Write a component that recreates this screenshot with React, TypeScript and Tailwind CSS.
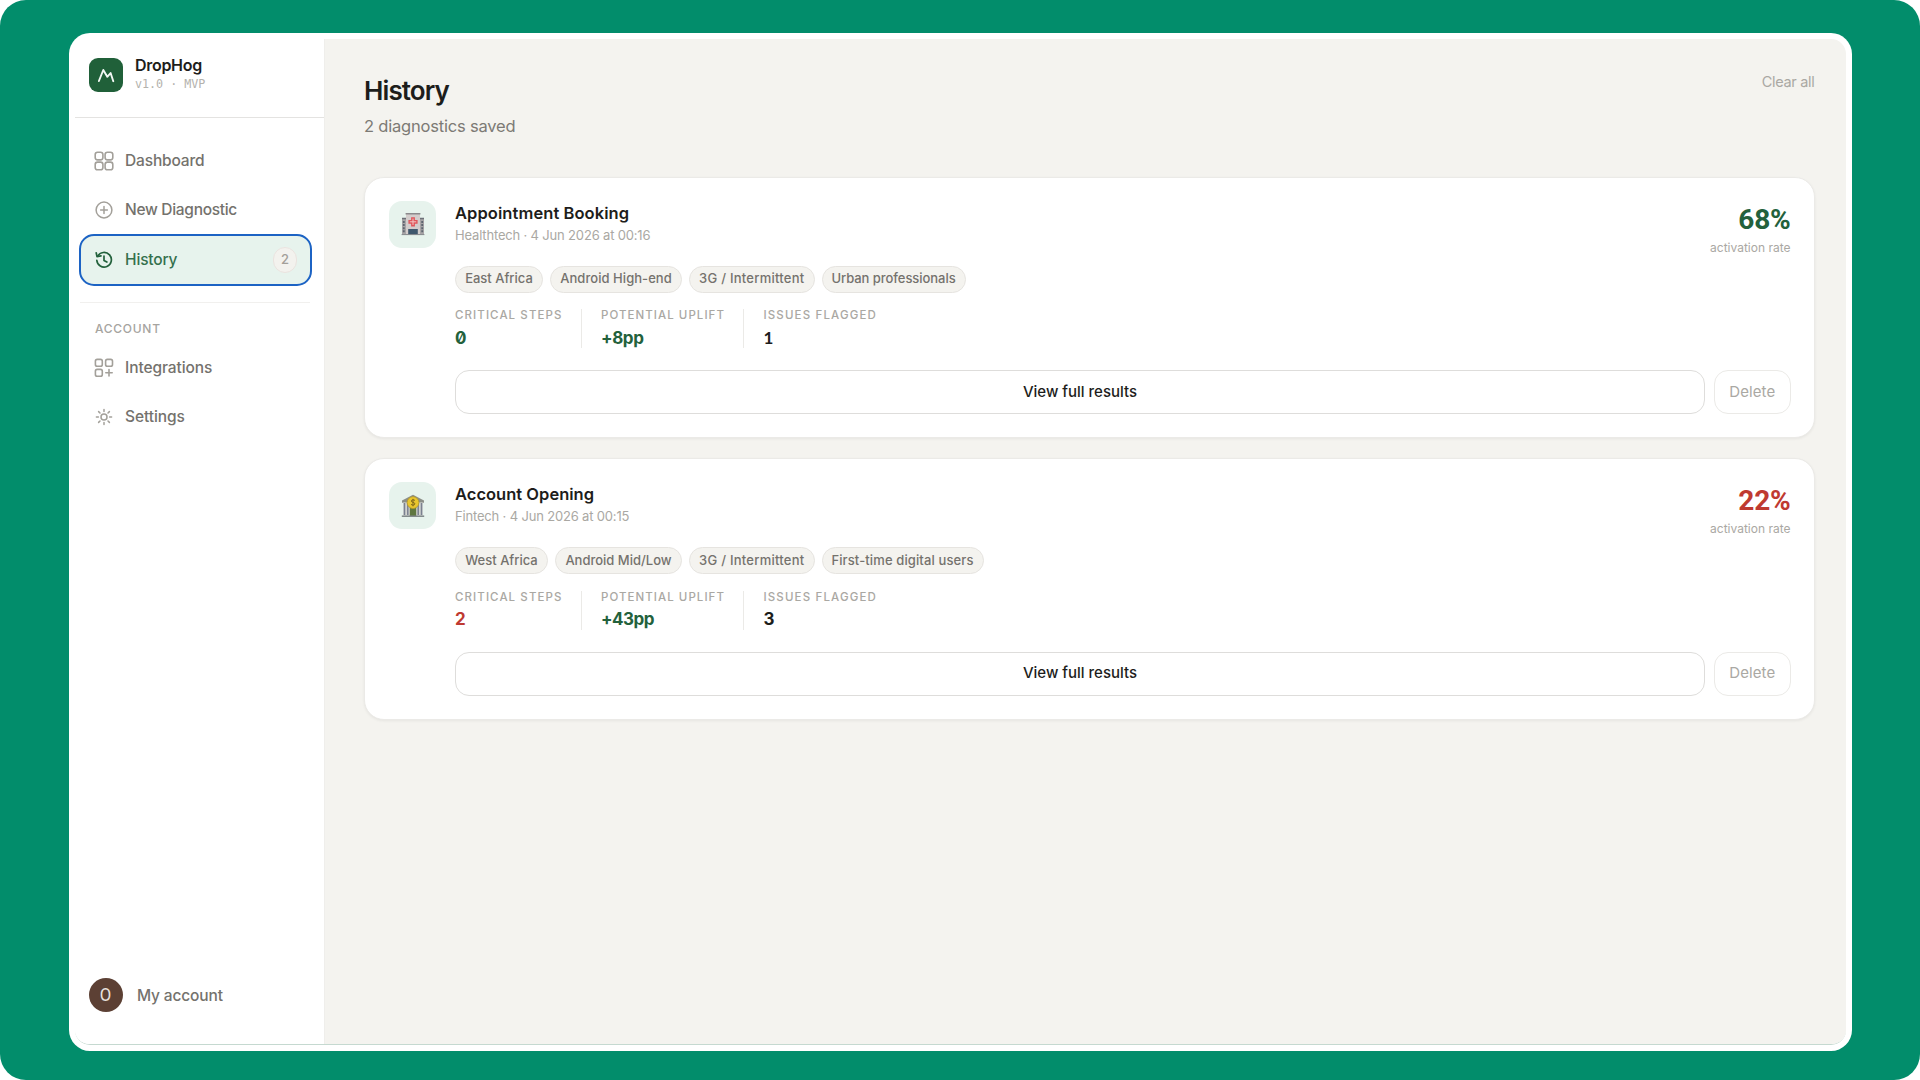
import React from 'react';

type Stat = { label: string; labelClass: string; value: string; valueClass: string };

type Diagnostic = {
  title: string;
  titleClass: string;
  meta: string;
  icon: React.ReactNode;
  rate: string;
  rateClass: string;
  tags: { label: string; className: string }[];
  stats: Stat[];
};

const GridIcon = () => (
  <svg className="size-5" viewBox="0 0 20 20" fill="none" stroke="currentColor" strokeWidth="1.6">
    <rect x="1.2" y="1.2" width="7.7" height="7.7" rx="2.3" />
    <rect x="11.1" y="1.2" width="7.7" height="7.7" rx="2.3" />
    <rect x="1.2" y="11.1" width="7.7" height="7.7" rx="2.3" />
    <rect x="11.1" y="11.1" width="7.7" height="7.7" rx="2.3" />
  </svg>
);

const PlusIcon = () => (
  <svg className="size-5" viewBox="0 0 20 20" fill="none" stroke="currentColor" strokeWidth="1.5" strokeLinecap="round">
    <circle cx="10" cy="10" r="7.9" />
    <path d="M10 6.6v6.8M6.6 10h6.8" />
  </svg>
);

const HistoryIcon = () => (
  <svg className="size-5" viewBox="0 0 20 20" fill="none" stroke="currentColor" strokeWidth="1.7" strokeLinecap="round" strokeLinejoin="round">
    <path d="M3.7 6.2A7.3 7.3 0 1 1 2.8 10.3" />
    <path d="M2.2 2.8l.8 3.8 4-.7" />
    <path d="M10 6.1v4.3l2.9 1.7" />
  </svg>
);

const IntegrationsIcon = () => (
  <svg className="size-5" viewBox="0 0 20 20" fill="none" stroke="currentColor" strokeWidth="1.6" strokeLinecap="round">
    <rect x="1.4" y="1.4" width="6.9" height="6.9" rx="1.8" />
    <rect x="11.6" y="1.4" width="6.9" height="6.9" rx="1.8" />
    <rect x="1.4" y="11.4" width="6.9" height="6.9" rx="1.8" />
    <path d="M15 11.6v6.4M11.8 14.8h6.4" />
  </svg>
);

const SettingsIcon = () => (
  <svg className="size-5" viewBox="0 0 20 20" fill="none" stroke="currentColor" strokeWidth="1.5" strokeLinecap="round">
    <circle cx="10" cy="10" r="3" />
    <path d="M10 2.4v2M10 15.6v2M2.4 10h2M15.6 10h2M4.6 4.6 6 6M14 14l1.4 1.4M4.6 15.4 6 14M14 6l1.4-1.4" />
  </svg>
);

const HospitalIcon = () => (
  <svg className="size-6" viewBox="0 0 24 24">
    <rect x="1" y="6" width="22" height="16.5" fill="#a7a4a6" />
    <path d="M1 6.5h4M19 6.5h4" stroke="#6d7078" strokeWidth="1.4" />
    <path d="M2.8 9v12M21.2 9v12" stroke="#5d6570" strokeWidth="1.8" strokeDasharray="2 1.1" />
    <rect x="5" y="1.5" width="14" height="21" fill="#d3cdcc" />
    <path d="M4.6 1.8h14.8" stroke="#8b8a8c" strokeWidth="1.6" />
    <path d="M12 5.2v9.2M7.4 9.8h9.2" stroke="#e0565b" strokeWidth="3.8" />
    <path d="M12 6.6v6.4M8.8 9.8h6.4" stroke="#f3c3c1" strokeWidth="1" />
    <rect x="7.2" y="17" width="9.6" height="5.5" fill="#3f586d" />
    <path d="M.6 22.6h22.8" stroke="#85878c" strokeWidth="1" />
  </svg>
);

const BankIcon = () => (
  <svg className="size-6" viewBox="0 0 24 24">
    <path d="M12 .8 23 6.5v2.3H1V6.5z" fill="#8c8f88" />
    <rect x="2.2" y="8.6" width="19.6" height="13" fill="#d2d3d0" />
    <path d="M3.5 9v12M6.8 9v12M17.2 9v12M20.5 9v12" stroke="#7a8190" strokeWidth="1.5" />
    <rect x="8.8" y="13" width="6.4" height="9" fill="#5f7740" />
    <path d="M.8 22.2h22.4" stroke="#7e8587" strokeWidth="1.5" />
    <circle cx="12" cy="8.6" r="5.9" fill="#e9c62e" stroke="#b99a22" strokeWidth=".8" />
    <path d="M14 6.6c-.7-1-3.6-1.1-3.7.4 0 1.7 3.6 1 3.6 2.9 0 1.6-3.1 1.5-3.9.4M12 4.8v7.5" stroke="#80671a" strokeWidth="1" fill="none" />
  </svg>
);

const LABELS = {
  critical: { label: 'Critical steps', labelClass: 'tracking-[1.09px]' },
  uplift: { label: 'Potential uplift', labelClass: 'tracking-[1.05px]' },
  issues: { label: 'Issues flagged', labelClass: 'tracking-[1.15px]' },
};

const diagnostics: Diagnostic[] = [
  {
    title: 'Appointment Booking',
    titleClass: 'tracking-[0.08px]',
    meta: 'Healthtech · 4 Jun 2026 at 00:16',
    icon: <HospitalIcon />,
    rate: '68%',
    rateClass: 'text-[#23613c]',
    tags: [
      { label: 'East Africa', className: 'w-[88px]' },
      { label: 'Android High-end', className: 'w-[132px] tracking-[0.05px]' },
      { label: '3G / Intermittent', className: 'w-[125.5px] tracking-[0.25px]' },
      { label: 'Urban professionals', className: 'w-[144px] tracking-[-0.05px]' },
    ],
    stats: [
      { ...LABELS.critical, value: '0', valueClass: 'text-[#23613c] slashed-zero' },
      { ...LABELS.uplift, value: '+8pp', valueClass: 'text-[#23613c] tracking-[-0.4px]' },
      { ...LABELS.issues, value: '1', valueClass: "text-[#1d1d1b] font-['Lato']" },
    ],
  },
  {
    title: 'Account Opening',
    titleClass: 'tracking-[0.02px]',
    meta: 'Fintech · 4 Jun 2026 at 00:15',
    icon: <BankIcon />,
    rate: '22%',
    rateClass: 'text-[#bf3a31]',
    tags: [
      { label: 'West Africa', className: 'w-[93px]' },
      { label: 'Android Mid/Low', className: 'w-[127px]' },
      { label: '3G / Intermittent', className: 'w-[125.5px] tracking-[0.25px]' },
      { label: 'First-time digital users', className: 'w-[162px] tracking-[0.12px]' },
    ],
    stats: [
      { ...LABELS.critical, value: '2', valueClass: 'text-[#bf3a31]' },
      { ...LABELS.uplift, value: '+43pp', valueClass: 'text-[#23613c] tracking-[-0.5px]' },
      { ...LABELS.issues, value: '3', valueClass: 'text-[#1d1d1b]' },
    ],
  },
];

const NavItem: React.FC<{ icon: React.ReactNode; label: string; className?: string }> = ({ icon, label, className }) => (
  <a href="#" className="flex h-[45px] items-center gap-[11px] px-[14px] text-[#a3a09a]">
    {icon}
    <span className={`text-[15.5px] font-[450] text-[#74726d] ${className ?? ''}`}>{label}</span>
  </a>
);

const Sidebar = () => (
  <aside className="flex w-[250px] shrink-0 flex-col border-r border-[#efeeeb] bg-white">
    <div className="flex h-[79px] gap-[12px] border-b border-[#e4e3e1] pt-[19px] pl-[14px]">
      <div className="flex size-[34px] items-center justify-center rounded-[9px] bg-[#206039]">
        <svg className="size-[18px]" viewBox="0 0 18 18" fill="none" stroke="#f2f8f4" strokeWidth="1.9" strokeLinecap="round" strokeLinejoin="round">
          <path d="M1.9 15 6.3 4l4 6.8L13.6 7l2.7 8.2" />
        </svg>
      </div>
      <div className="-mt-[4px]">
        <div className="text-[16px] leading-[22px] font-semibold tracking-[-0.3px] text-[#1d1d1b]">DropHog</div>
        <div className="font-['DejaVu_Sans_Mono',monospace] text-[11.7px] leading-[17px] text-[#b4b2ad]">v1.0 · MVP</div>
      </div>
    </div>

    <nav className="flex flex-col gap-[4px] pt-[20px] pr-[13px] pl-[5px]">
      <NavItem icon={<GridIcon />} label="Dashboard" className="tracking-[-0.15px]" />
      <NavItem icon={<PlusIcon />} label="New Diagnostic" className="tracking-[-0.3px]" />
      <a
        href="#"
        className="-mx-px -mt-[2px] flex h-[52px] items-center gap-[11px] rounded-[15px] border-[2.5px] border-[#1c63c4] bg-[#e7f3ed] pr-[13px] pl-[13px] text-[#23613c]"
      >
        <HistoryIcon />
        <span className="text-[15.5px] font-medium tracking-[-0.15px] text-[#35704d]">History</span>
        <span className="ml-auto flex h-[26px] w-[24px] items-center justify-center rounded-full border border-[#eae3df] bg-[#f3f2ee] text-[13px] font-medium text-[#a3a09a]">
          2
        </span>
      </a>
    </nav>

    <div className="mt-[16px] mr-[14px] ml-[5px] h-px shrink-0 bg-[#f1f0ee]" />
    <div className="mt-[18px] pl-[20px] text-[12px] leading-[16px] font-medium tracking-[0.72px] text-[#a6a49f] uppercase">
      Account
    </div>
    <nav className="mt-[8px] flex flex-col gap-[4px] px-[5px]">
      <NavItem icon={<IntegrationsIcon />} label="Integrations" className="tracking-[-0.08px]" />
      <NavItem icon={<SettingsIcon />} label="Settings" className="tracking-[-0.08px]" />
    </nav>

    <div className="mt-auto mb-[32px] flex items-center gap-[14px] pl-[14px]">
      <div className="flex size-[34px] items-center justify-center rounded-full bg-[#5c4034] font-['Roboto'] text-[19px] text-[#e9e2df]">
        <span className="scale-x-[0.88]">O</span>
      </div>
      <span className="pt-px text-[15.5px] font-[450] tracking-[-0.15px] text-[#74726d]">My account</span>
    </div>
  </aside>
);

const DiagnosticCard: React.FC<{ item: Diagnostic }> = ({ item }) => (
  <article className="flex gap-[19px] rounded-[20px] border border-[#ebeae7] bg-white pt-[23px] pr-[23px] pb-[23px] pl-[24px] shadow-[0_1px_3px_rgba(0,0,0,0.06)]">
    <div className="flex size-[47px] shrink-0 items-center justify-center rounded-[13px] bg-[#e7f3ed]">{item.icon}</div>
    <div className="flex-1">
      <div className="flex h-[65px] justify-between">
        <div>
          <h2 className={`text-[16.5px] leading-[24px] font-semibold text-[#1d1d1b] ${item.titleClass}`}>{item.title}</h2>
          <p className="text-[13px] leading-[20px] tracking-[-0.17px] text-[#aaa8a3]">{item.meta}</p>
        </div>
        <div className="text-right">
          <div className={`font-['Roboto'] text-[28px] leading-[38px] font-bold tracking-[-0.2px] ${item.rateClass}`}>{item.rate}</div>
          <div className="mt-px text-[12px] leading-[16px] text-[#aaa8a3]">activation rate</div>
        </div>
      </div>

      <div className="flex gap-[7px]">
        {item.tags.map((tag) => (
          <span
            key={tag.label}
            className={`flex h-[27px] items-center justify-center rounded-full border border-[#e6e4e0] bg-[#f4f3ef] text-[13px] font-medium whitespace-nowrap text-[#74726d] ${tag.className}`}
          >
            {tag.label}
          </span>
        ))}
      </div>

      <div className="mt-[16.5px] flex divide-x divide-[#ebeae7]">
        {item.stats.map((stat) => (
          <div key={stat.label} className="h-[39px] pr-[18.5px] pl-[19px] first:pl-0">
            <div className={`text-[11.5px] leading-[12px] font-medium whitespace-nowrap text-[#aaa8a3] uppercase ${stat.labelClass}`}>
              {stat.label}
            </div>
            <div className={`mt-[5.5px] text-[17px] leading-[22px] font-bold ${stat.valueClass}`}>{stat.value}</div>
          </div>
        ))}
      </div>

      <div className="mt-[22px] flex h-[44px] gap-[9px]">
        <button className="flex-1 rounded-[14px] border border-[#dedddb] text-[15px] font-medium text-[#1d1d1b]">View full results</button>
        <button className="w-[76.5px] rounded-[14px] border border-[#ebeae7] text-[15px] tracking-[0.1px] text-[#aaa8a3]">Delete</button>
      </div>
    </div>
  </article>
);

export default function App() {
  return (
    <div className="h-[1080px] w-[1920px] overflow-hidden bg-white font-['Inter',sans-serif]">
      <div className="h-full rounded-[26px] bg-[#028d6b] pt-[33px] pl-[69px]">
        <div className="h-[1018px] w-[1782.5px] rounded-[21px] bg-white p-[6px]">
          <div className="flex h-full overflow-hidden rounded-[15px] border-b border-[#c5d9d0]">
            <Sidebar />
            <main className="flex-1 bg-[#f4f3ef] pr-[31px] pl-[39px]">
              <header className="flex h-[137.5px] items-start justify-between pt-[34px]">
                <div>
                  <h1 className="text-[26px] leading-[36px] font-semibold tracking-[-0.9px] text-[#1d1d1b]">History</h1>
                  <p className="mt-[5px] text-[16.5px] leading-[24px] tracking-[-0.2px] text-[#7c7a75]">2 diagnostics saved</p>
                </div>
                <button className="-mt-px text-[14.5px] leading-[20px] tracking-[-0.3px] text-[#aaa8a3]">Clear all</button>
              </header>
              <div className="flex flex-col gap-[20px]">
                {diagnostics.map((item) => (
                  <DiagnosticCard key={item.title} item={item} />
                ))}
              </div>
            </main>
          </div>
        </div>
      </div>
    </div>
  );
}
